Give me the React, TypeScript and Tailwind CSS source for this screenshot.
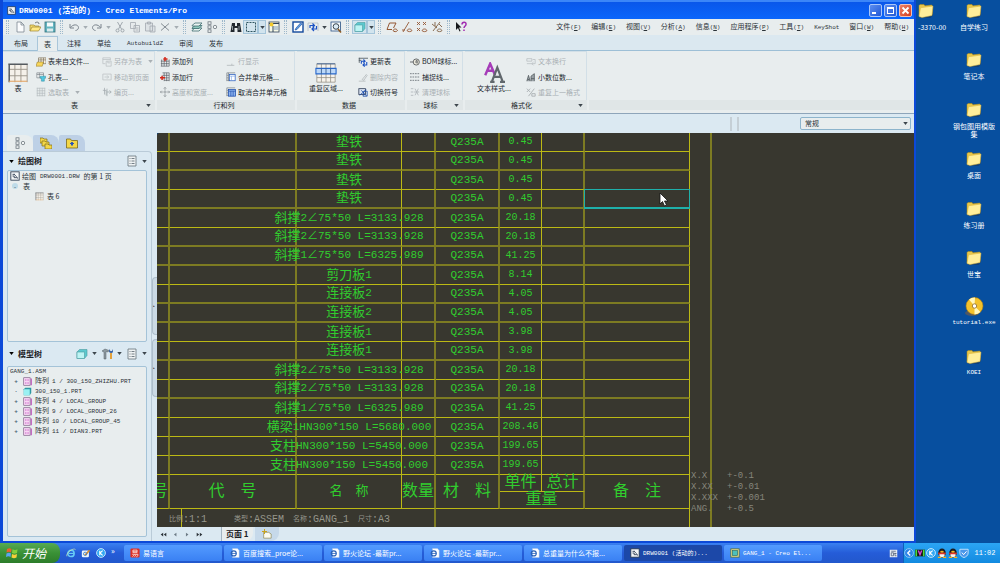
import type { ReactNode } from "react";

const shapes: Record<string, ReactNode> = {
  app: (
    <>
      <rect x="1" y="1" width="10" height="10" fill="#f4f6f8" stroke="#26364a" />
      <path d="M3 4h3M3 6h2v2h4v1M5 4l3 3" stroke="#26364a" fill="none" />
    </>
  ),
  newFile: <path d="M3 1h4l3 3v7H3zM7 1v3h3" fill="#fbfcfd" stroke="#7d8893" strokeWidth=".8" />,
  open: (
    <>
      <path d="M1 10V4h4l1 1h4v2" fill="#f5dc6d" stroke="#9c8432" strokeWidth=".7" />
      <path d="M1 10l2-4h9l-2.500 4z" fill="#ffe985" stroke="#9c8432" strokeWidth=".7" />
      <path d="M6 2c2-1.500 4-1 4 1" fill="none" stroke="#3c464e" strokeWidth=".7" />
    </>
  ),
  save: (
    <>
      <rect x="1" y="1" width="10" height="10" fill="#63b5c0" stroke="#35727d" strokeWidth=".8" />
      <rect x="3" y="1.500" width="6" height="4" fill="#f4fafa" />
      <rect x="3" y="7.500" width="6" height="3" fill="#dcebed" />
    </>
  ),
  undo: <path d="M2 3v4h4M2.500 6.500C5 3 10 3 10.500 6.500c0 2-2 3-3 3" fill="none" stroke="#7a838c" />,
  redo: <path d="M10 3v4H6M9.500 6.500C7 3 2 3 1.500 6.500c0 2 2 3 3 3" fill="none" stroke="#7a838c" />,
  cut: (
    <g fill="none" stroke="#99a0a7" strokeWidth=".9">
      <path d="M3.500 1l4 7M8.500 1l-4 7" />
      <circle cx="3.500" cy="9.500" r="1.500" />
      <circle cx="8.500" cy="9.500" r="1.500" />
    </g>
  ),
  copy: <path d="M1.500 1.500h5v6h-5zM5 4.500h5.500v6.500H5zM6.500 7h3M6.500 9h3" fill="#e6eaec" stroke="#a3aab0" strokeWidth=".8" />,
  paste: <path d="M1.500 2h7v8h-7zM3.500 1h3v2h-3zM6 5h5v6H6z" fill="#dde2e5" stroke="#a3aab0" strokeWidth=".8" />,
  remove: <path d="M2 2.500l8 7M10 2.500l-8 7" fill="none" stroke="#858d94" />,
  layers: (
    <g fill="#e9f4f2" stroke="#3f6d70" strokeWidth=".8">
      <path d="M1 9.500l3-2.500h7l-3 3H1z" />
      <path d="M1 7l3-2.500h7L8 7.500H1z" fill="#8dc9bd" />
      <path d="M1 4.500L4 2h7L8 5H1z" />
    </g>
  ),
  nodes: (
    <g fill="#f2f5f6" stroke="#6d777e" strokeWidth=".8">
      <rect x="2" y="0.800" width="3" height="2.500" />
      <rect x="2" y="4.800" width="3" height="2.500" />
      <rect x="2" y="8.800" width="3" height="2.500" />
      <circle cx="9" cy="6" r="1.700" />
    </g>
  ),
  find: (
    <>
      <path d="M2 2h3v3h2V2h3l1.500 9H7.500V7h-3v4H.5z" fill="#22282e" />
      <path d="M2.500 5v4M9 5v4" stroke="#8d979e" />
    </>
  ),
  select: <rect x="1.500" y="1.500" width="9" height="9" fill="none" stroke="#2f5560" strokeDasharray="2 1" />,
  windowStar: (
    <>
      <rect x="1" y="1" width="10" height="10" fill="#f7f9e6" stroke="#31445c" strokeWidth=".8" />
      <path d="M1 2.500h10M5 5v6" stroke="#31445c" />
      <circle cx="3.500" cy="3.500" r="2" fill="#f1c82c" />
      <path d="M6 6h4M6 8h4" stroke="#5f87bb" strokeWidth=".8" />
    </>
  ),
  repaint: (
    <>
      <rect x="1" y="1" width="10" height="10" fill="#fff" stroke="#12489c" strokeWidth="1.400" />
      <path d="M3 9l2-.5L10 3 8.500 2 4 7z" fill="#5f9be0" stroke="#12489c" strokeWidth=".6" />
    </>
  ),
  refresh: (
    <>
      <path d="M1 2h10M1 2v8M11 2v8" stroke="#b4bbc0" strokeWidth=".8" fill="none" />
      <path d="M3 7V4.500h4M5.500 2.500l2 2-2 2M9.500 5v3h-4M7 6L5 8l2 2" fill="none" stroke="#1d53c4" strokeWidth="1.200" />
    </>
  ),
  zoomFit: (
    <>
      <rect x="1" y="1" width="9.500" height="9" fill="#f6f9fb" stroke="#2a5183" strokeWidth=".8" />
      <circle cx="6" cy="5.500" r="2.800" fill="#dcebf5" stroke="#27333e" strokeWidth=".9" />
      <path d="M8 8l3 3.500" stroke="#8d5a20" strokeWidth="1.500" />
    </>
  ),
  cube: (
    <>
      <path d="M1 4l2.500-2.500H11v6L8.500 10.500H1z" fill="#5cc9cf" stroke="#4b9aa0" strokeWidth=".6" />
      <rect x="1" y="4" width="7.500" height="6.500" fill="#bdf4f4" stroke="#4b9aa0" strokeWidth=".6" />
    </>
  ),
  plane: <path d="M1 8.500L3.500 2H10L7.500 7M1 8.500h5M7 9.500c1-2 3.500-2 4.500 0c-1 1.500-3.500 1.500-4.500 0z" fill="none" stroke="#945733" />,
  axis: <path d="M2 11L8 1M1 9h3M6 9.500c1-2 4-2 5 0c-1 1.500-4 1.500-5 0z" fill="none" stroke="#945733" strokeWidth=".9" />,
  points: <path d="M1 1l3 3M4 1L1 4M7 1l3 3M10 1L7 4M1 7l3 3M4 7l-3 3M6 9.500c1-2 4-2 5 0c-1 1.500-4 1.500-5 0z" fill="none" stroke="#945733" strokeWidth=".9" />,
  csys: <path d="M2 10L9 1M1 3l5 4M4 1v4M8 3l3 3M6 9.500c1-2 4-2 5 0c-1 1.500-4 1.500-5 0z" fill="none" stroke="#806143" strokeWidth=".9" />,
  help: (
    <>
      <path d="M1 1v8l2-2 1.500 3.500 1-.5L4 6.500h2.500z" fill="#17191b" />
      <path d="M7 3.500C7 .5 11.500.5 11 3.500c0 1.500-2 1.500-2 3.500M9 8.500v1.500" fill="none" stroke="#a12bb0" strokeWidth="1.500" />
    </>
  ),
  table: (
    <>
      <rect x="1" y="1" width="10" height="10" fill="#f5f1ea" />
      <path d="M4.300 1v10M7.600 1v10M11 1v10M1 4h10M1 7.500h10" stroke="#9a948a" strokeWidth=".5" fill="none" />
      <path d="M.7 1.200h10.600M1.200 1v10" stroke="#555b60" strokeWidth=".8" fill="none" />
      <path d="M1 10.500h10" stroke="#e2a567" strokeWidth=".6" />
    </>
  ),
  tableGray: <path d="M1 1.500h10M1.500 1v10M4.500 1v10M7.500 1v10M10.500 1v10M1 4.500h10M1 7.500h10M1 10.500h10" stroke="#b4babd" strokeWidth=".8" fill="none" />,
  tableFile: (
    <>
      <path d="M3 1h9v7H3zM3 3.500h9M6 1v7M9 1v7" fill="#f5efe4" stroke="#6d6047" strokeWidth=".7" />
      <path d="M0 11l1.500-5H9l-1.500 5z" fill="#f7d65c" stroke="#8c7020" strokeWidth=".6" />
    </>
  ),
  hole: (
    <>
      <path d="M1 1h8v6H1zM1 3h8M4 1v6" fill="#f2f4f4" stroke="#6a737a" strokeWidth=".7" />
      <path d="M5 5h6.500v2.500H10V11H6.500V7.500H5z" fill="#4fc8e0" stroke="#237b92" strokeWidth=".5" />
    </>
  ),
  saveAsGray: <path d="M1 1h9v3M1 1v7h3M1 3h9M5 5h6v6H5zM7 5v2h3" fill="none" stroke="#bcc1c4" strokeWidth=".9" />,
  moveGray: <path d="M1 2.500h10v7H1zM3 6h5M6 4l2 2-2 2" fill="none" stroke="#bcc1c4" strokeWidth=".9" />,
  pagingGray: <path d="M1 4h4v6M3 1v8M6 6h5M9 4l2 2-2 2M6 2v9" fill="none" stroke="#a3a9ad" strokeWidth=".9" />,
  addCol: (
    <>
      <path d="M2 3v8M5 3v8M8 3v8M11 3v8M1 5h10M1 8h10M1 11h10" stroke="#545b60" strokeWidth=".8" />
      <path d="M6 0v5M4 2.500h5" stroke="#d32a1c" strokeWidth="1.800" />
    </>
  ),
  addRow: (
    <>
      <path d="M3 1h8M3 4h8M5 7h6M5 10h6M5 1v10M8 1v10M11 1v10" stroke="#545b60" strokeWidth=".8" />
      <path d="M0 7h6M2.500 4.500v5" stroke="#d32a1c" strokeWidth="1.800" />
    </>
  ),
  sizeGray: <path d="M6 0v4M6 12V8M0 6h4M12 6H8M4.500 2L6 .5 7.500 2M4.500 10L6 11.500 7.500 10M2 4.500L.5 6 2 7.500M10 4.500L11.500 6 10 7.500M5 5h2v2H5z" fill="none" stroke="#979da1" />,
  rowGray: <path d="M1 10h9M7 8v2" stroke="#b4babd" fill="none" />,
  merge: (
    <>
      <path d="M1 1h10M1 1v10M3 1v10M1 4h2M1 7h2M1 10h3" stroke="#727a80" strokeWidth=".8" fill="none" />
      <rect x="4" y="3" width="7" height="7.500" fill="#fff" stroke="#2b5fc0" strokeWidth=".9" />
      <path d="M4 5h7M6.500 5v5" stroke="#6d9be4" strokeWidth=".7" />
    </>
  ),
  unmerge: (
    <>
      <path d="M1 1h10M1 1v10M1 4h2M1 7h2M1 10h3" stroke="#727a80" strokeWidth=".8" fill="none" />
      <rect x="3" y="3" width="8.500" height="8" fill="#8db4f1" stroke="#1c4cab" strokeWidth=".9" />
      <path d="M5.800 5v6M8.600 5v6M3 5h8.500" stroke="#1c4cab" strokeWidth=".8" />
    </>
  ),
  repeat: (
    <>
      <path d="M1 1h10v10H1zM3.500 1v10M6 1v10M8.500 1v10M1 8.500h10" fill="#f7f3ec" stroke="#8f8a80" strokeWidth=".4" />
      <path d="M.5 3.500h11v3H.5z" fill="#bcd8f8" stroke="#2968cb" strokeWidth=".6" />
      <path d="M1 1h10M3.500 3.500v3M6 3.500v3M8.500 3.500v3" stroke="#3d6296" strokeWidth=".5" />
    </>
  ),
  update: (
    <>
      <path d="M1 1.500h11M1.500 1v6M1 4h3" stroke="#4d5960" fill="none" />
      <path d="M4 8V5h4M6.500 3l2 2-2 2M10.500 6v3.500h-4M8 7.500l-2 2 2 2" fill="none" stroke="#1d53c4" strokeWidth="1.300" />
    </>
  ),
  eraseGray: <path d="M1 11h8M5 9l5-6 1 1-4 6z" fill="none" stroke="#b4babd" />,
  toggle: (
    <>
      <rect x="1" y="2" width="8" height="7" fill="#dbe3f2" stroke="#33415b" />
      <path d="M2 10l8-7M4 4l6 6.500M7 5h4v6H6z" stroke="#1b4ca8" fill="none" />
    </>
  ),
  balloon: (
    <>
      <circle cx="7.500" cy="6" r="3.700" fill="#eceade" stroke="#54585a" />
      <path d="M0 6h4M7 4h1.500v4M6 6h3" stroke="#54585a" fill="none" />
    </>
  ),
  snap: <path d="M0 2h12M0 6h12M0 10h12" stroke="#666e73" strokeDasharray="2 1" />,
  cleanGray: <path d="M1 2h3M1 6h3M1 10h3M6 2l4 8M10 2L6 10M5 6h6" stroke="#b0b6ba" fill="none" />,
  wrapGray: <path d="M1 2h6v3H1zM1 8h6M8 3h3v5H7M9 6L7 8l2 2" fill="none" stroke="#bcc1c4" />,
  decimals: <path d="M1 11l2-7 2 7M2 9h2M6 11V5l4-3v9M6 8h4" fill="#9da5aa" stroke="#4d5559" strokeWidth=".9" />,
  formatGray: <path d="M1 2l4 4M5 2L1 6M3 11l7-9M7 8h4v3H7z" fill="none" stroke="#a5abaf" />,
  list: (
    <>
      <path d="M2 1h8v10H2z" fill="#eef2f3" stroke="#66727a" strokeWidth=".8" />
      <path d="M3.500 3.500h1M5.500 3.500h3M3.500 6h1M5.500 6h3M3.500 8.500h1M5.500 8.500h3" stroke="#66727a" strokeWidth=".9" />
    </>
  ),
  tools: (
    <>
      <path d="M1 3l3-2 4 1.500-1 1.500-2-.5V11H3V4z" fill="#8e9aa1" stroke="#505b62" strokeWidth=".5" />
      <path d="M9 5v6h2V5z" fill="#e3a13c" />
      <path d="M8 1v3l1.500 1H11l1-1V1l-1 2H9.500z" fill="#3f67a8" />
    </>
  ),
  folders: (
    <g fill="#f4d748" stroke="#7c6a1b" strokeWidth=".7">
      <path d="M0 1h3l1 1h3v4H0z" />
      <path d="M2 4h3l1 1h3v4H2z" />
      <path d="M5 7h3l1 1h3v4H5z" />
    </g>
  ),
  folderStar: (
    <>
      <path d="M0.500 2h4l1 1.500h6V11H.5z" fill="#f4d748" stroke="#7c6a1b" strokeWidth=".8" />
      <path d="M6 5l1 1.500L6 8.500 5 6.500zM4 6.500h4" fill="#2754b8" stroke="#2754b8" />
    </>
  ),
  part: (
    <>
      <path d="M1 3l2-2h8v7l-2 3H1z" fill="#2d98a2" />
      <rect x="1" y="3" width="8" height="8" fill="#9af0f2" />
    </>
  ),
  pattern: (
    <>
      <rect x="1" y="1" width="8.500" height="10" fill="#f7d7f4" stroke="#6c4a74" strokeWidth=".8" />
      <path d="M11 2v9M3 4h1.500M6 4h1.500M3 8h1.500M6 8h1.500" stroke="#b22fae" strokeWidth="1.200" />
    </>
  ),
  newSheet: (
    <>
      <path d="M2 4h6l3 2v5H2z" fill="#fbfbf0" stroke="#87804f" strokeWidth=".8" />
      <path d="M3 0v6M0 3h6" stroke="#c9a41c" strokeWidth="1.200" />
    </>
  ),
  word: (
    <>
      <path d="M3 .5h6L11 3v8.500H3z" fill="#fff" stroke="#a9bddb" strokeWidth=".5" />
      <circle cx="4.500" cy="6.500" r="3" fill="none" stroke="#2b62b8" strokeWidth="1.400" />
      <path d="M2 6.500h5.500" stroke="#2b62b8" />
    </>
  ),
  ie: (
    <>
      <circle cx="6" cy="6.500" r="3.800" fill="none" stroke="#67cdf7" strokeWidth="1.800" />
      <path d="M3 6.500h6.500" stroke="#67cdf7" strokeWidth="1.400" />
      <path d="M1 10C-.5 6 9-1 11.500 2" fill="none" stroke="#d8efae" strokeWidth=".8" />
    </>
  ),
  desktopPen: (
    <>
      <rect x="1" y="3" width="8.500" height="8" rx="1.500" fill="#eef5fb" />
      <path d="M4 8l5.500-6 1.500 1.200L6 9z" fill="#d98e2c" />
      <circle cx="5" cy="7" r="2" fill="none" stroke="#3c7cc0" />
    </>
  ),
  kugou: (
    <>
      <circle cx="6" cy="6" r="5.300" fill="#32a9f3" stroke="#dff3ff" />
      <path d="M4.500 3.200v5.600M8 3.200L4.800 6 8 8.800" fill="none" stroke="#fff" strokeWidth="1.300" />
    </>
  ),
  yi: (
    <>
      <rect x=".5" y=".5" width="11" height="11" rx="1.500" fill="#df2f23" />
      <path d="M3.500 2.500h5v3h-5zM3.500 4h5M2.500 7.500h7c0 2-.5 3-2 3M5.500 7.500L3 10.500M7.500 7.500L5.500 10.500" fill="none" stroke="#fff" strokeWidth=".8" />
    </>
  ),
  model: (
    <>
      <rect x="1" y="1" width="10" height="10" fill="#f0e486" stroke="#4b6b50" />
      <rect x="3" y="3" width="6" height="6" fill="#4cc0bb" stroke="#256c6b" strokeWidth=".8" />
    </>
  ),
  ime: (
    <>
      <rect x="1" y="1" width="10" height="10" fill="#e6ecf4" />
      <path d="M3 3h6M3 5h3v4H3zM8 5v4h2M7 6h3" fill="none" stroke="#3b4a66" strokeWidth=".9" />
    </>
  ),
  chevron: (
    <>
      <circle cx="6" cy="6" r="5.300" fill="#2d86e8" stroke="#b9dcfb" strokeWidth=".8" />
      <path d="M7.500 3L4.500 6l3 3" fill="none" stroke="#fff" strokeWidth="1.600" />
    </>
  ),
  meter: (
    <>
      <rect x="0" y="2" width="12" height="8" fill="#151a15" />
      <path d="M1.500 2v8M10.500 2v8" stroke="#49dc40" strokeWidth="2" />
      <path d="M4 3l2 5 2-5" fill="none" stroke="#d445d6" strokeWidth="1.700" />
    </>
  ),
  penguin: (
    <>
      <ellipse cx="6" cy="6" rx="4.500" ry="5.500" fill="#1b1d22" />
      <ellipse cx="6" cy="8.500" rx="3.200" ry="2.700" fill="#f6f6f6" />
      <path d="M1.500 6.500h9" stroke="#e13325" strokeWidth="2" />
      <ellipse cx="6" cy="4.400" rx="2.200" ry="1" fill="#f4b327" />
      <path d="M1 11.200h4M7 11.200h4" stroke="#f4b327" strokeWidth="1.600" />
    </>
  ),
  shield: (
    <>
      <path d="M1 1.500h10V6c0 3-2.500 4.500-5 5.500C3.500 10.500 1 9 1 6z" fill="#4a97e9" stroke="#e8f4ff" strokeWidth=".9" />
      <path d="M3.500 5.500L5.500 8l3.500-4" fill="none" stroke="#fff" strokeWidth="1.200" />
    </>
  ),
};

function Icon({ name, className = "size-3" }: { name: string; className?: string }) {
  return (
    <svg viewBox="0 0 12 12" className={`shrink-0 ${className}`} aria-hidden="true">
      {shapes[name]}
    </svg>
  );
}

function Caret({ className = "fill-[#3d464d]" }: { className?: string }) {
  return (
    <svg viewBox="0 0 6 4" className={`h-[3px] w-[5px] shrink-0 ${className}`} aria-hidden="true">
      <path d="M0 0h6L3 4z" />
    </svg>
  );
}

const toolbar: string[][] = [
  ["newFile", "open", "save"],
  ["undo", ">", "redo", ">", "cut", "copy", "paste", "remove", ">"],
  ["layers", "nodes"],
  ["find", "select*", ">*", "windowStar"],
  ["repaint", "refresh", ">", "zoomFit"],
  ["cube*", ">*"],
  ["plane", "axis", "points", "csys"],
  ["help"],
];

const menus = [
  ["文件", "F"],
  ["编辑", "E"],
  ["视图", "V"],
  ["分析", "A"],
  ["信息", "N"],
  ["应用程序", "P"],
  ["工具", "T"],
  ["KeyShot", ""],
  ["窗口", "W"],
  ["帮助", "H"],
];

const tabs = ["布局", "表", "注释", "草绘", "AutobuildZ", "审阅", "发布"];

type Command = { icon: string; label: string; off?: boolean; menu?: boolean };
type Group = { title: string; more?: boolean; width: string; big?: Command; bigWidth?: string; columns: Command[][] };

const groups: Group[] = [
  {
    title: "表",
    more: true,
    width: "w-[152px]",
    big: { icon: "table", label: "表" },
    bigWidth: "w-[30px]",
    columns: [
      [
        { icon: "tableFile", label: "表来自文件..." },
        { icon: "hole", label: "孔表..." },
        { icon: "tableGray", label: "选取表", off: true, menu: true },
      ],
      [
        { icon: "saveAsGray", label: "另存为表", off: true, menu: true },
        { icon: "moveGray", label: "移动到页面", off: true },
        { icon: "pagingGray", label: "编页...", off: true },
      ],
    ],
  },
  {
    title: "行和列",
    width: "w-[138px]",
    columns: [
      [
        { icon: "addCol", label: "添加列" },
        { icon: "addRow", label: "添加行" },
        { icon: "sizeGray", label: "高度和宽度...", off: true },
      ],
      [
        { icon: "rowGray", label: "行显示", off: true },
        { icon: "merge", label: "合并单元格..." },
        { icon: "unmerge", label: "取消合并单元格" },
      ],
    ],
  },
  {
    title: "数据",
    width: "w-[108px]",
    big: { icon: "repeat", label: "重复区域..." },
    bigWidth: "w-[58px]",
    columns: [
      [
        { icon: "update", label: "更新表" },
        { icon: "eraseGray", label: "删除内容", off: true },
        { icon: "toggle", label: "切换符号" },
      ],
    ],
  },
  {
    title: "球标",
    more: true,
    width: "w-[56px]",
    columns: [
      [
        { icon: "balloon", label: "BOM球标..." },
        { icon: "snap", label: "捕捉线..." },
        { icon: "cleanGray", label: "清理球标", off: true },
      ],
    ],
  },
  {
    title: "格式化",
    more: true,
    width: "w-[122px]",
    big: { icon: "text", label: "文本样式..." },
    bigWidth: "w-[58px]",
    columns: [
      [
        { icon: "wrapGray", label: "文本换行", off: true },
        { icon: "decimals", label: "小数位数..." },
        { icon: "formatGray", label: "重复上一格式", off: true },
      ],
    ],
  },
];

type Part = { name: string; spec?: string; weight: string; dull?: boolean };

const parts: Part[] = [
  { name: "垫铁", weight: "0.45" },
  { name: "垫铁", weight: "0.45", dull: true },
  { name: "垫铁", weight: "0.45" },
  { name: "垫铁", weight: "0.45", dull: true },
  { name: "斜撑", spec: "2∠75*50 L=3133.928", weight: "20.18" },
  { name: "斜撑", spec: "2∠75*50 L=3133.928", weight: "20.18", dull: true },
  { name: "斜撑", spec: "1∠75*50 L=6325.989", weight: "41.25", dull: true },
  { name: "剪刀板", spec: "1", weight: "8.14" },
  { name: "连接板", spec: "2", weight: "4.05", dull: true },
  { name: "连接板", spec: "2", weight: "4.05", dull: true },
  { name: "连接板", spec: "1", weight: "3.98" },
  { name: "连接板", spec: "1", weight: "3.98", dull: true },
  { name: "斜撑", spec: "2∠75*50 L=3133.928", weight: "20.18" },
  { name: "斜撑", spec: "2∠75*50 L=3133.928", weight: "20.18", dull: true },
  { name: "斜撑", spec: "1∠75*50 L=6325.989", weight: "41.25" },
  { name: "横梁", spec: "1HN300*150 L=5680.000", weight: "208.46" },
  { name: "支柱", spec: "HN300*150 L=5450.000", weight: "199.65" },
  { name: "支柱", spec: "HN300*150 L=5450.000", weight: "199.65" },
];

const model = [
  { kind: "阵列", name: "1 / 300_150_ZHIZHU.PRT" },
  { kind: "", name: "300_150_1.PRT" },
  { kind: "阵列", name: "4 / LOCAL_GROUP" },
  { kind: "阵列", name: "9 / LOCAL_GROUP_26" },
  { kind: "阵列", name: "10 / LOCAL_GROUP_45" },
  { kind: "阵列", name: "11 / DIAN3.PRT" },
];

const tolerances = [
  ["X.X", "+-0.1"],
  ["X.XX", "+-0.01"],
  ["X.XXX", "+-0.001"],
  ["ANG.", "+-0.5"],
];

const notes = [
  ["比例", ":1:1", "w-[65px]"],
  ["类型", ":ASSEM", "w-[59px]"],
  ["名称", ":GANG_1", "w-[65px]"],
  ["尺寸", ":A3", "w-[40px]"],
];

const desktop = ["自学练习", "笔记本", "钢包图用模版集", "桌面", "练习册", "世宝", "tutorial.exe", "KOEI"];

const tasks = [
  { icon: "yi", label: "易语言" },
  { icon: "word", label: "百度搜索_proe论..." },
  { icon: "word", label: "野火论坛 -最新pr..." },
  { icon: "word", label: "野火论坛 -最新pr..." },
  { icon: "word", label: "总重量为什么不报..." },
  { icon: "app", label: "DRW0001 (活动的)...", active: true },
  { icon: "model", label: "GANG_1 - Creo El..." },
];

const mono = "font-['Liberation_Mono','Noto_Sans_CJK_SC',monospace]";
const thick = "border-r-2 border-r-[#7d7b22]";
const thin = "border-r border-r-[#bcb914]";

function TitleBar() {
  return (
    <header className="flex h-[19px] items-center justify-between border-t-2 border-[#3c86f8] bg-linear-to-b from-[#0a57ea] to-[#0b66fb] pr-0.5 pl-1">
      <h1 className={`flex items-center gap-[3px] text-[8px] font-bold whitespace-pre text-white ${mono}`}>
        <Icon name="app" className="size-[9px]" />
        DRW0001 (活动的) - Creo Elements/Pro
      </h1>
      <div className="flex gap-0.5">
        <button aria-label="最小化" className="flex size-[13px] items-end rounded-xs border border-[#a9c6f8] bg-linear-to-br from-[#5b8df0] to-[#2257d6] p-0.5">
          <span className="h-0.5 w-1 bg-white" />
        </button>
        <button aria-label="最大化" className="size-[13px] rounded-xs border border-[#a9c6f8] bg-linear-to-br from-[#5b8df0] to-[#2257d6] p-0.5">
          <span className="block size-full border border-t-2 border-white" />
        </button>
        <button aria-label="关闭" className="size-[13px] rounded-xs border border-[#f4c0b4] bg-linear-to-br from-[#ee8066] to-[#d23c1c]">
          <svg viewBox="0 0 11 11" className="size-full" aria-hidden="true">
            <path d="M2.500 2.500l6 6M8.500 2.500l-6 6" stroke="#fff" strokeWidth="1.800" />
          </svg>
        </button>
      </div>
    </header>
  );
}

function Toolbar() {
  return (
    <div className="flex h-4 items-center justify-between bg-[#e8edee]">
      <div className="flex items-center">
        {toolbar.map((group, i) => (
          <div key={i} className="flex items-center">
            <span className="mx-[3px] h-3.5 w-[3px] border-x border-dotted border-[#9db8cb]" />
            {group.map((item, j) => {
              const lit = item.endsWith("*");
              const name = item.replace("*", "");
              return (
                <button
                  key={j}
                  aria-label={name === ">" ? "更多" : name}
                  className={`flex h-3.5 items-center justify-center ${name === ">" ? "w-2" : "w-[15px]"} ${lit ? "border border-[#a5c5da] bg-[#d2e4ee]" : ""}`}
                >
                  {name === ">" ? <Caret className={i === 1 ? "fill-[#a5adb2]" : "fill-[#3d464d]"} /> : <Icon name={name} className="size-3" />}
                </button>
              );
            })}
          </div>
        ))}
      </div>
      <nav className="flex gap-[10px] pr-[5px]">
        {menus.map(([label, key]) => (
          <button key={label} className="text-[7px] leading-[9px] whitespace-nowrap text-[#2b3238]">
            <span className={label === "KeyShot" ? `text-[6px] ${mono}` : ""}>{label}</span>
            {key && (
              <span className={`text-[6px] ${mono}`}>
                (<u>{key}</u>)
              </span>
            )}
          </button>
        ))}
      </nav>
    </div>
  );
}

function TabStrip() {
  return (
    <nav className="flex h-4 items-end gap-0.5 border-b border-[#9dbfd6] bg-[#dbe8f0] pl-1">
      {tabs.map((tab) => (
        <button
          key={tab}
          className={`h-[14px] text-[#2b3238] ${
            tab === "表" ? "-mb-px box-content border-x border-t border-[#a9c6da] bg-[#e8edee] px-1.5" : "px-[7px]"
          } ${tab === "AutobuildZ" ? `text-[6px] ${mono}` : "text-[7px]"}`}
        >
          {tab}
        </button>
      ))}
    </nav>
  );
}

function BigIcon({ name }: { name: string }) {
  if (name !== "text") return <Icon name={name} className="size-[22px]" />;
  return (
    <svg viewBox="0 0 20 20" className="size-[22px]" aria-hidden="true">
      <path d="M2 12L6.500 1.500 11 12M3.500 8h6" fill="none" stroke="#a53cb8" strokeWidth="2.200" />
      <path d="M8 18l5-13 5 13M10 13.500h6M6.500 18h4M15.500 18H20" fill="none" stroke="#60676c" strokeWidth="2" />
    </svg>
  );
}

function Ribbon() {
  return (
    <section className="flex h-[63px] items-stretch border-b border-[#8ea5ba] bg-[#e8edee] pb-[3px]">
      {groups.map((group) => (
        <div key={group.title} className={`mr-0.5 flex shrink-0 flex-col ${group.width}`}>
          <div className="flex h-[49px] border-t border-r border-[#d2dfe7] pt-0.5">
            {group.big && (
              <button className={`flex shrink-0 flex-col items-center pt-2 text-[7px] leading-[9px] whitespace-nowrap text-[#23292e] ${group.bigWidth}`}>
                <BigIcon name={group.big.icon} />
                {group.big.label}
              </button>
            )}
            {group.columns.map((column, i) => (
              <div key={i} className="flex w-[66px] shrink-0 flex-col pl-[3px] last:w-auto">
                {column.map((c) => (
                  <button
                    key={c.label}
                    className={`flex h-4 items-center gap-0.5 text-[7px] whitespace-nowrap ${c.off ? "text-[#a9b0b4]" : "text-[#23292e]"}`}
                  >
                    <Icon name={c.icon} className="size-2.5" />
                    {c.label}
                    {c.menu && <Caret className="ml-1 fill-[#a9b0b4]" />}
                  </button>
                ))}
              </div>
            ))}
          </div>
          <div className="flex h-[10px] items-center bg-[#e0e6e7] pr-1 text-[7px] text-[#23292e]">
            <span className="flex-1 text-center">{group.title}</span>
            {group.more && <Caret />}
          </div>
        </div>
      ))}
      <div className="mt-[49px] h-[10px] flex-1 bg-[#e0e6e7]" />
    </section>
  );
}

function PanelHeader({ title, icons, className }: { title: string; icons: string[]; className: string }) {
  return (
    <div className={`flex shrink-0 items-center gap-1 pl-1.5 ${className}`}>
      <Caret className="fill-black" />
      <h2 className="flex-1 text-[8px] font-bold text-[#1b2126]">{title}</h2>
      {icons.map((icon) => (
        <button key={icon} aria-label={icon} className="flex w-[21px] items-center gap-1">
          <Icon name={icon} />
          <Caret />
        </button>
      ))}
    </div>
  );
}

function Sidebar() {
  return (
    <aside className="flex w-[154px] shrink-0 bg-[#dbe9f2]">
      <div className="flex w-[149px] flex-col pt-0.5">
        <div className="flex h-4 shrink-0 items-stretch pl-1">
          {["nodes", "folders", "folderStar"].map((icon, i) => (
            <button
              key={icon}
              aria-label={icon}
              className={`flex w-[26px] items-center justify-center rounded-tl-xs rounded-tr-lg ${i === 0 ? "bg-[#e8edee]" : "bg-[#bdd0e6]"}`}
            >
              <Icon name={icon} />
            </button>
          ))}
        </div>
        <div className="flex min-h-0 flex-1 flex-col rounded-tr-sm border-t border-r border-[#bacbd8] pr-1">
          <PanelHeader title="绘图树" icons={["list"]} className="h-[18px]" />
          <ul className="ml-1 flex-1 basis-0 rounded-xs border border-[#a4c3d8] bg-[#e8edee] pl-0.5 text-[7px] text-[#2b3238]">
            <li className="flex h-2.5 items-center gap-0.5">
              <Icon name="app" className="size-2.5" />
              <span>绘图</span>
              <span className={`px-0.5 text-[6px] ${mono}`}>DRW0001.DRW</span>
              <span>的第 1 页</span>
            </li>
            <li className="flex h-2.5 items-center gap-[5px] pl-0.5">
              <span className="flex size-1.5 items-center justify-center rounded-full bg-[#bfdbe8] text-[6px]">-</span>表
            </li>
            <li className="flex h-2.5 items-center gap-[3px] pl-[25px]">
              <Icon name="table" className="size-[9px]" />表 6
            </li>
          </ul>
          <PanelHeader title="模型树" icons={["cube", "tools", "list"]} className="h-6" />
          <ul className={`mb-1 ml-1 flex-1 basis-0 rounded-xs border border-[#a4c3d8] bg-[#e8edee] pl-0.5 text-[6px] text-[#2b3238] ${mono}`}>
            <li className="flex h-2.5 items-center">GANG_1.ASM</li>
            {model.map((node) => (
              <li key={node.name} className="flex h-2.5 items-center gap-[3px] pl-[3px]">
                <span className="w-1.5 text-center font-bold text-[#47606f]">{node.kind ? "+" : "·"}</span>
                <Icon name={node.kind ? "pattern" : "part"} className="ml-px size-[9px]" />
                {node.kind && <span className="text-[7px]">{node.kind}</span>}
                <span className="whitespace-nowrap">{node.name}</span>
              </li>
            ))}
          </ul>
        </div>
      </div>
      <div className="flex flex-1 flex-col justify-center gap-1">
        <button aria-label="上折叠" className="flex h-[58px] items-center rounded-l-sm border border-r-0 border-[#aebecb] bg-[#cbdae5] text-[5px]">‣</button>
        <button aria-label="下折叠" className="flex h-[58px] items-center rounded-l-sm border border-r-0 border-[#aebecb] bg-[#cbdae5] text-[5px]">‣</button>
      </div>
    </aside>
  );
}

function PartsTable() {
  return (
    <table className={`w-[533px] table-fixed border-separate border-spacing-0 text-center leading-none ${mono}`}>
      <colgroup>
        <col className="w-[13px]" />
        <col className="w-[127px]" />
        <col className="w-[105px]" />
        <col className="w-[34px]" />
        <col className="w-[64px]" />
        <col className="w-[42px]" />
        <col className="w-[43px]" />
        <col className="w-[105px]" />
      </colgroup>
      <tbody>
        {parts.map((part, i) => {
          const line = part.dull ? "border-b-2 border-b-[#7d7b22]" : "border-b border-b-[#bcb914]";
          return (
            <tr key={i} className="h-[19px]">
              <td className={`p-0 ${thick} ${line}`} />
              <td className={`p-0 ${thick} ${line}`} />
              <td className={`p-0 ${thin} ${line}`}>
                <div className="relative flex items-center justify-center whitespace-pre">
                  <span className="text-[13px]">{part.name}</span>
                  <span className="text-[11px]">{part.spec}</span>
                </div>
              </td>
              <td className={`p-0 ${thick} ${line}`} />
              <td className={`p-0 text-[11px] ${thick} ${line}`}>Q235A</td>
              <td className={`p-0 text-[10px] ${thin} ${line}`}>{part.weight}</td>
              <td className={`p-0 ${thick} ${line}`} />
              <td className={`relative p-0 ${thin} ${line}`}>
                {i === 3 && (
                  <>
                    <span className="absolute -inset-x-px -top-px -bottom-0.5 z-10 border border-b-2 border-[#1fb0aa]" />
                    <svg viewBox="0 0 10 15" className="absolute top-0.5 right-5 h-[15px] w-2.5" aria-hidden="true">
                      <path d="M1 1v11l2.500-2.500L5.500 14l2-1-2-4H9z" fill="#fff" stroke="#111" strokeWidth=".8" />
                    </svg>
                  </>
                )}
              </td>
            </tr>
          );
        })}
        <tr className="h-[17px] text-[16px]">
          <th rowSpan={2} className={`border-b border-b-[#bcb914] p-0 font-normal ${thick}`}>
            <div className="flex justify-end">号</div>
          </th>
          <th rowSpan={2} className={`border-b border-b-[#bcb914] p-0 font-normal ${thick}`}>代　号</th>
          <th rowSpan={2} className={`border-b border-b-[#bcb914] p-0 text-[13px] font-normal ${thin}`}>名　称</th>
          <th rowSpan={2} className={`border-b border-b-[#bcb914] p-0 font-normal ${thick}`}>
            <div className="flex justify-center whitespace-nowrap">数量</div>
          </th>
          <th rowSpan={2} className={`border-b border-b-[#bcb914] p-0 font-normal ${thick}`}>材　料</th>
          <th className={`border-b border-b-[#bcb914] p-0 font-normal ${thin}`}>单件</th>
          <th className={`border-b border-b-[#bcb914] p-0 font-normal ${thick}`}>总计</th>
          <th rowSpan={2} className={`border-b border-b-[#bcb914] p-0 font-normal ${thin}`}>备　注</th>
        </tr>
        <tr className="h-[17px] text-[16px]">
          <th colSpan={2} className={`border-b border-b-[#bcb914] p-0 font-normal ${thick}`}>重量</th>
        </tr>
      </tbody>
    </table>
  );
}

function Drawing() {
  return (
    <main className="relative flex flex-1 overflow-hidden rounded-tl-xs bg-[#38372f] text-[#31cd2e]">
      <div className="flex w-[533px] shrink-0 flex-col">
        <PartsTable />
        <div className="flex flex-1">
          <span className={`w-[25px] ${thin}`} />
          <span className={`w-[254px] ${thick}`} />
          <span className={`flex-1 ${thin}`} />
        </div>
      </div>
      <div className={`w-[22px] shrink-0 ${thick}`} />
      <dl className={`absolute bottom-3 left-[534px] text-[9px] leading-[11px] text-[#86867c] ${mono}`}>
        {tolerances.map(([digits, value]) => (
          <div key={digits} className="flex">
            <dt className="w-9">{digits}</dt>
            <dd>{value}</dd>
          </div>
        ))}
      </dl>
      <div className={`absolute bottom-0.5 left-3 flex text-[10px] leading-[11px] text-[#96968c] ${mono}`}>
        {notes.map(([label, value, width]) => (
          <span key={label} className={`flex items-center ${width}`}>
            <span className="text-[7px]">{label}</span>
            {value}
          </span>
        ))}
      </div>
    </main>
  );
}

function SheetTabs() {
  return (
    <div className="flex h-[14px] shrink-0 items-center bg-[#dbe9f2]">
      <div className="flex w-[64px] justify-start gap-1 pl-[3px]">
        {["M5 1L1 4l4 3zM10 1L6 4l4 3z", "M7 1L3 4l4 3z", "M3 1l4 3-4 3z", "M1 1l4 3-4 3zM6 1l4 3-4 3z"].map((d, i) => (
          <button key={d} aria-label={`页面导航 ${i + 1}`} className="w-2">
            <svg viewBox="0 0 11 8" className={`h-[5px] w-[7px] ${i === 1 || i === 2 ? "fill-[#6d7b86]" : "fill-[#2b3238]"}`} aria-hidden="true">
              <path d={d} />
            </svg>
          </button>
        ))}
      </div>
      <button className="h-full rounded-br-lg border-l border-[#a4b4c0] bg-[#e8edee] px-1 text-[8px] font-bold text-[#1b2126]">页面 1</button>
      <button aria-label="新页面" className="ml-0.5 flex h-full w-6 items-center justify-center rounded-br-lg bg-[#c6d9ea]">
        <Icon name="newSheet" className="size-2.5" />
      </button>
    </div>
  );
}

function FolderIcon() {
  return (
    <svg viewBox="0 0 16 16" className="size-4" aria-hidden="true">
      <path d="M2 14.500V2.500l1-1h4l1 1.500h7v9l-2.500 3z" fill="#16335c" opacity=".6" />
      <path d="M1 13V2.500L2 1.500h4l1 1.300 7-.8v9z" fill="#e8c648" stroke="#b08c1d" strokeWidth=".5" />
      <path d="M1 13.500L2.500 4.800 15 3l-1 9.500L4 14.500z" fill="#ffee9a" stroke="#d8b33b" strokeWidth=".5" />
    </svg>
  );
}

function DiscIcon() {
  return (
    <svg viewBox="0 0 20 20" className="size-5" aria-hidden="true">
      <ellipse cx="8" cy="16" rx="7" ry="3" fill="#4d5866" />
      <circle cx="10.500" cy="9" r="8.500" fill="#f3c22c" stroke="#b07c12" strokeWidth=".6" />
      <path d="M10.500 9L5 2.500A8.500 8.500 0 0 1 11 .6zM10.500 9l6 6a8.500 8.500 0 0 1-6 2.400z" fill="#fff6bb" />
      <circle cx="10.500" cy="9" r="2.200" fill="#fff" stroke="#8c6a27" strokeWidth=".8" />
    </svg>
  );
}

function Desktop() {
  return (
    <section className="flex w-[84px] shrink-0 text-[7px] leading-[8px] text-white">
      <a href="#3370" className="flex w-8 shrink-0 flex-col items-start pt-[3px] pl-0.5">
        <FolderIcon />
        <span className="pt-1 whitespace-nowrap">-3370-00</span>
      </a>
      <div className="grid h-[398px] flex-1 grid-rows-8 pt-[3px]">
        {desktop.map((label) => (
          <a key={label} href={`#${label}`} className="flex flex-col items-center text-center">
            <span className="flex h-4 items-center">{label.endsWith(".exe") ? <DiscIcon /> : <FolderIcon />}</span>
            <span className={`w-[46px] pt-1 ${/^[a-zA-Z.]+$/.test(label) ? `text-[6px] ${mono}` : ""}`}>{label}</span>
          </a>
        ))}
      </div>
    </section>
  );
}

function Taskbar() {
  return (
    <footer className="flex h-5 shrink-0 items-stretch bg-linear-to-b from-[#3a80f0] via-[#255cd8] to-[#2258cc] text-white">
      <button className="flex w-[60px] shrink-0 items-center gap-1 rounded-r-lg bg-linear-to-b from-[#57ab52] via-[#3a9136] to-[#2d7d2a] pl-1.5 text-[12px] leading-none italic">
        <svg viewBox="0 0 12 12" className="size-3" aria-hidden="true">
          <path d="M1 2c2-1 3-1 4.500 0L5 5.500c-1.500-1-2.500-1-4.500 0z" fill="#ef5f2c" />
          <path d="M6.500 2.300c2 1 3 1 5 0L11 6c-2 1-3 1-5 0z" fill="#83cf3c" />
          <path d="M.5 6.500c2-1 3-1 4.500 0L4.500 10c-1.500-1-2.500-1-4.500 0z" fill="#5aa5f2" />
          <path d="M6 7c2 1 3 1 5 0l-.5 3.500c-2 1-3 1-5 0z" fill="#f8cf3a" />
        </svg>
        开始
      </button>
      <div className="flex w-16 shrink-0 items-center gap-[5px] pl-1.5">
        {["ie", "desktopPen", "kugou"].map((icon) => (
          <button key={icon} aria-label={icon}>
            <Icon name={icon} className="size-2.5" />
          </button>
        ))}
        <span className="pb-1 text-[8px]">»</span>
      </div>
      <div className="flex min-w-0 flex-1 items-center gap-0.5">
        {tasks.map((task, i) => (
          <button
            key={i}
            className={`flex h-4 max-w-[98px] flex-1 items-center gap-[3px] rounded-xs pl-1.5 text-[7px] whitespace-nowrap ${
              task.active ? "bg-[#1c48a8]" : "bg-linear-to-b from-[#539bff] to-[#3a80f3]"
            }`}
          >
            <Icon name={task.icon} className="size-2.5" />
            <span className={/^[A-Z]/.test(task.label) ? `text-[6px] ${mono}` : ""}>{task.label}</span>
          </button>
        ))}
      </div>
      <div className="flex w-3.5 shrink-0 items-center">
        <Icon name="ime" className="size-[9px]" />
      </div>
      <div className="flex w-[97px] shrink-0 items-center gap-px border-l border-[#0f5fb8] bg-linear-to-b from-[#2ba5f4] to-[#128ae0]">
        {["chevron", "meter", "kugou", "penguin", "penguin", "shield"].map((icon, i) => (
          <Icon key={i} name={icon} className="size-2.5" />
        ))}
        <time className={`flex-1 text-center text-[7px] ${mono}`}>11:02</time>
      </div>
    </footer>
  );
}

export default function App() {
  return (
    <div className="flex h-screen flex-col overflow-hidden bg-[#074f9f] font-['Noto_Sans_CJK_SC',sans-serif]">
      <div className="flex min-h-0 flex-1">
        <div className="flex min-w-0 flex-1 flex-col border-r-2 border-b-2 border-l-3 border-[#0c49d8]">
          <TitleBar />
          <Toolbar />
          <TabStrip />
          <Ribbon />
          <div className="flex h-[19px] shrink-0 items-center justify-end gap-[5px] bg-[#dbe9f2] pr-[3px]">
            <span className="h-3.5 w-0.5 bg-[#c5cfd6]" />
            <span className="mr-14 h-3.5 w-0.5 bg-[#c5cfd6]" />
            <div className="relative flex items-center">
              <select
                aria-label="选取过滤器"
                className="h-[13px] w-[111px] appearance-none rounded-xs border border-[#8db4cc] bg-[#e8edee] pl-1 text-[7px] leading-none text-[#2b3238]"
              >
                <option>常规</option>
              </select>
              <Caret className="pointer-events-none absolute right-[3px] fill-[#3d464d]" />
            </div>
          </div>
          <div className="flex min-h-0 flex-1">
            <Sidebar />
            <div className="flex min-w-0 flex-1 flex-col">
              <Drawing />
              <SheetTabs />
            </div>
          </div>
        </div>
        <Desktop />
      </div>
      <Taskbar />
    </div>
  );
}
